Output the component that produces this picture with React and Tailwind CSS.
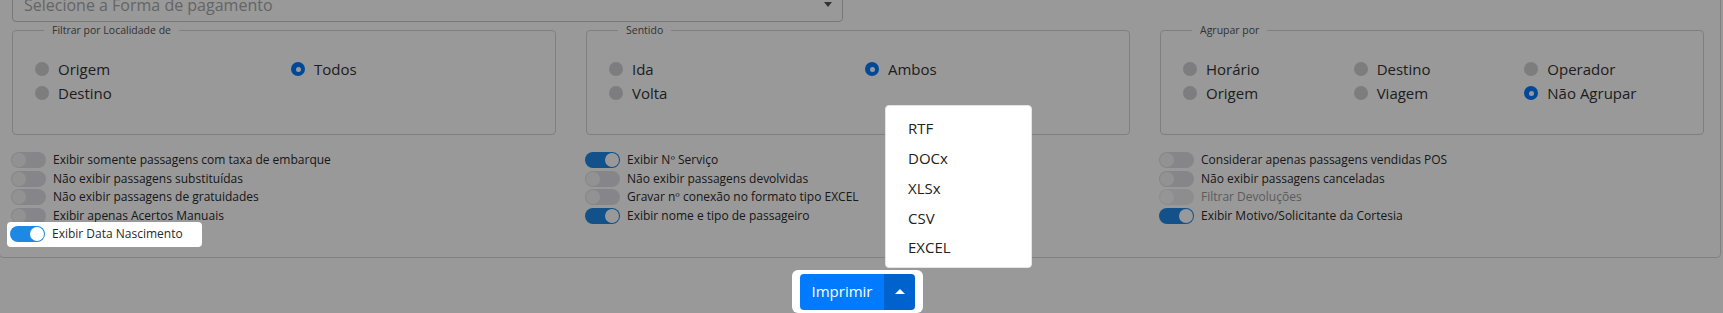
import React from "react";

function Radio({ label, checked }) {
  return (
    <div className="flex items-center h-[24px]">
      <span
        className={
          "shrink-0 w-[14px] h-[14px] rounded-full flex items-center justify-center " +
          (checked ? "bg-[#007bff]" : "bg-[#d0d0d6]")
        }
      >
        {checked && <span className="w-[5px] h-[5px] rounded-full bg-white" />}
      </span>
      <span className="ml-[9px] text-[15px] text-[#333]">{label}</span>
    </div>
  );
}

function Group({ title, cols, items }) {
  return (
    <fieldset className="border border-[#d4d4d4] rounded-[4px] pl-[22px] pt-[19px] pb-[29px]">
      <legend className="ml-[9px] px-[8px] text-[10.5px] leading-[16px] text-[#555]">{title}</legend>
      <div className={"grid w-[512px] " + (cols === 3 ? "grid-cols-3" : "grid-cols-2")}>
        {items.map((it, i) => (
          <Radio key={i} label={it[0]} checked={it[1]} />
        ))}
      </div>
    </fieldset>
  );
}

function Switch({ on, disabled }) {
  return (
    <span
      className={
        "relative shrink-0 w-[35px] h-[16px] rounded-full flex items-center " +
        (on ? "bg-[#1e88e5] justify-end" : disabled ? "bg-[#ececf0]" : "bg-[#e0e0e6]")
      }
    >
      <span
        className={
          "w-[14px] h-[14px] rounded-full " +
          (on ? "bg-white mr-[1px]" : disabled ? "bg-[#f8f8f8] ml-[1px]" : "bg-[#f4f4f4] ml-[1px]")
        }
      />
    </span>
  );
}

function Toggle({ label, on, disabled }) {
  return (
    <div className="flex items-center h-[18.5px] -ml-[1px]">
      <Switch on={on} disabled={disabled} />
      <span className={"ml-[7px] text-[12px] leading-[18px] whitespace-nowrap " + (disabled ? "text-[#999]" : "text-[#2a2a2a]")}>
        {label}
      </span>
    </div>
  );
}

export default function App() {
  return (
    <div className="relative w-[1723px] h-[313px] overflow-hidden bg-white font-['Open_Sans',sans-serif]">
      <div className="-mt-[30px] -ml-[1px] mr-[2px] border border-[#d8d8d8] rounded-[4px] pl-[12px] pr-[16px] pt-[16px] pb-[13px]">
        <div className="grid grid-cols-2 gap-[30px]">
          <div className="relative h-[35px] border border-[#c8c8c8] rounded-[4px] flex items-center pl-[11px]">
            <span className="text-[16px] text-[#a8a8a8]">Selecione a Forma de pagamento</span>
            <span className="absolute right-[10px] top-[14px] w-0 h-0 border-l-[4px] border-r-[4px] border-t-[5px] border-l-transparent border-r-transparent border-t-[#555]" />
          </div>
          <div />
        </div>
        <div className="grid grid-cols-3 gap-[30px]">
          <Group
            title="Filtrar por Localidade de"
            cols={2}
            items={[["Origem", false], ["Todos", true], ["Destino", false]]}
          />
          <Group title="Sentido" cols={2} items={[["Ida", false], ["Ambos", true], ["Volta", false]]} />
          <Group
            title="Agrupar por"
            cols={3}
            items={[
              ["Horário", false],
              ["Destino", false],
              ["Operador", false],
              ["Origem", false],
              ["Viagem", false],
              ["Não Agrupar", true],
            ]}
          />
        </div>
        <div className="grid grid-cols-3 gap-[30px] mt-[16px]">
          <div className="flex flex-col">
            <Toggle label="Exibir somente passagens com taxa de embarque" />
            <Toggle label="Não exibir passagens substituídas" />
            <Toggle label="Não exibir passagens de gratuidades" />
            <Toggle label="Exibir apenas Acertos Manuais" />
            <div className="relative z-10 bg-white rounded-[4px] w-[195px] -ml-[5px] pl-[4px] -my-[3px] py-[3px]">
              <Toggle label="Exibir Data Nascimento" on />
            </div>
          </div>
          <div className="flex flex-col">
            <Toggle label="Exibir Nº Serviço" on />
            <Toggle label="Não exibir passagens devolvidas" />
            <Toggle label="Gravar nº conexão no formato tipo EXCEL" />
            <Toggle label="Exibir nome e tipo de passageiro" on />
          </div>
          <div className="flex flex-col">
            <Toggle label="Considerar apenas passagens vendidas POS" />
            <Toggle label="Não exibir passagens canceladas" />
            <Toggle label="Filtrar Devoluções" disabled />
            <Toggle label="Exibir Motivo/Solicitante da Cortesia" on />
          </div>
        </div>
      </div>

      <div className="flex justify-center pr-[8px] mt-[12px]">
        <div className="relative z-10 bg-white rounded-[6px] px-[8px] pt-[4px] pb-[3px]">
          <div className="flex h-[36px]">
            <div className="w-[84px] bg-[#007bff] rounded-l-[4px] flex items-center justify-center text-white text-[15px]">
              Imprimir
            </div>
            <div className="w-[31px] bg-[#0062cc] rounded-r-[4px] flex items-center justify-center">
              <span className="w-0 h-0 border-l-[5px] border-r-[5px] border-b-[5px] border-l-transparent border-r-transparent border-b-white" />
            </div>
          </div>
          <div className="absolute left-[93px] bottom-[calc(100%+2px)] w-[147px] bg-white rounded-[4px] border border-[#e4e4e4] pt-[8px] pb-[4px]">
            {["RTF", "DOCx", "XLSx", "CSV", "EXCEL"].map((t) => (
              <div key={t} className="h-[29.75px] flex items-center pl-[22px] text-[15px] text-[#222]">
                {t}
              </div>
            ))}
          </div>
        </div>
      </div>

      <div className="absolute inset-0 z-[5] bg-black/40 pointer-events-none" />
    </div>
  );
}
